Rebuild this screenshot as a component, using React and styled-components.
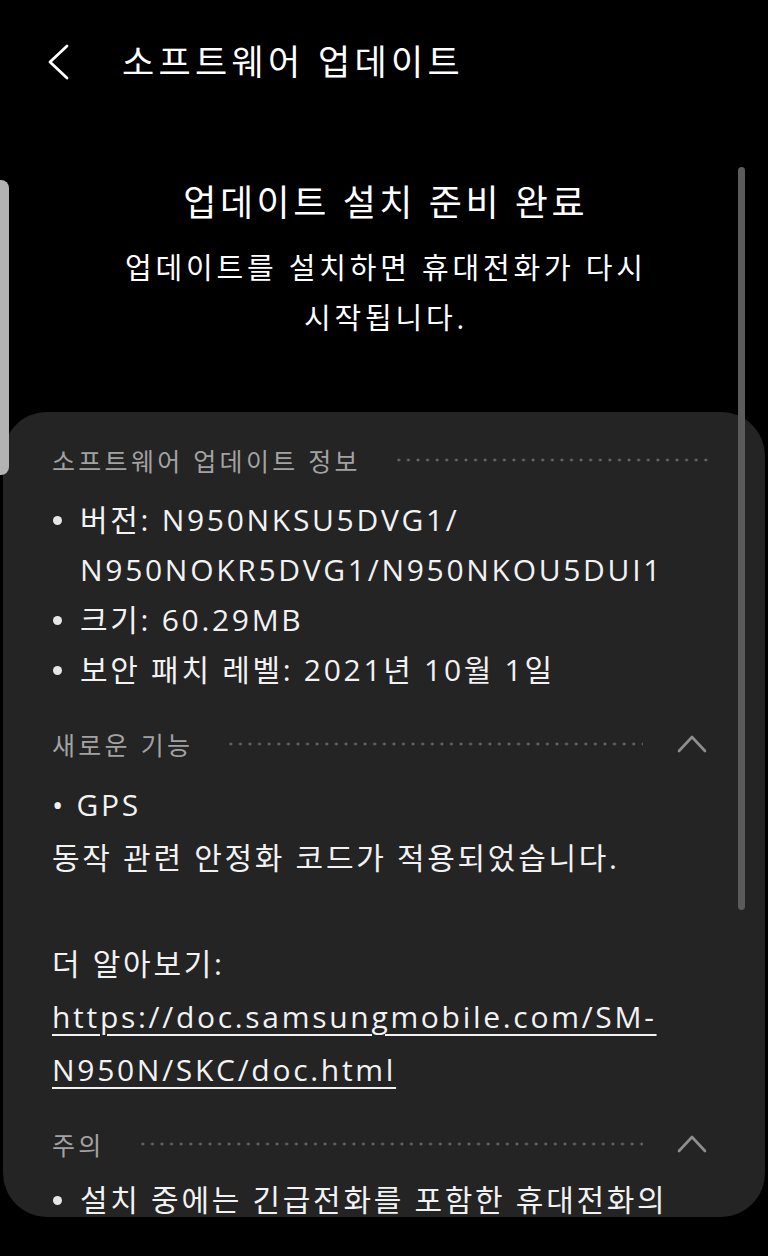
import React from "react";
import styled, { createGlobalStyle } from "styled-components";

const FONT = `"Open Sans", "Noto Sans CJK KR", sans-serif`;

const Global = createGlobalStyle`
  html, body { margin: 0; padding: 0; background: #000; }
  body { font-family: ${FONT}; -webkit-font-smoothing: antialiased; }
  * { box-sizing: border-box; }
`;

const Screen = styled.div`
  position: relative;
  width: 768px;
  height: 1256px;
  background: #000;
  overflow: hidden;
  color: #f2f2f2;
  font-family: ${FONT};
`;

const Header = styled.header`
  height: 124px;
  display: flex;
  align-items: center;
  padding-left: 46px;
`;

const BackButton = styled.button`
  width: 76px;
  height: 50px;
  padding: 0;
  border: 0;
  background: transparent;
  display: flex;
  align-items: center;
  cursor: pointer;
`;

const Title = styled.h1`
  margin: 0;
  font-size: 35px;
  font-weight: 400;
  letter-spacing: 4.3px;
  color: #fff;
  line-height: 50px;
`;

const Hero = styled.section`
  padding-top: 54px;
  text-align: center;
`;

const Heading = styled.h2`
  margin: 0;
  padding-left: 3.5px;
  font-size: 36px;
  font-weight: 400;
  letter-spacing: 3.5px;
  line-height: 50px;
  color: #fff;
`;

const SubText = styled.p`
  margin: 15px 0 0;
  padding-left: 3.8px;
  font-size: 29px;
  letter-spacing: 3.8px;
  line-height: 50px;
  color: #fff;
`;

const Card = styled.main`
  margin: 69px 3px 0;
  height: 805px;
  background: #242424;
  border-radius: 44px;
  padding: 28px 57px 0 49px;
  overflow: hidden;
`;

const Section = styled.section`
  margin-top: ${(p) => p.$top || 0}px;
`;

const SectionHeader = styled.div`
  height: 40px;
  display: flex;
  align-items: center;
  gap: 33px;
`;

const SectionTitle = styled.h3`
  margin: 0;
  font-size: 25px;
  font-weight: 400;
  letter-spacing: 3.3px;
  color: #a2a2a2;
  white-space: nowrap;
`;

const Dots = styled.div`
  flex: 1;
  height: 4px;
  background-image: radial-gradient(circle, #666 1.3px, transparent 1.7px);
  background-size: 9.6px 4px;
  background-repeat: repeat-x;
`;

const Toggle = styled.button`
  width: 32px;
  height: 24px;
  padding: 0;
  border: 0;
  background: transparent;
  display: flex;
  align-items: center;
  justify-content: center;
`;

const List = styled.ul`
  list-style: none;
  margin: ${(p) => p.$top}px 0 0;
  padding: 0;
`;

const Item = styled.li`
  display: flex;
  font-size: 30px;
  letter-spacing: 2.7px;
  line-height: 50px;
  color: #f2f2f2;
`;

const Bullet = styled.span`
  flex: 0 0 28px;
  height: 50px;
  display: flex;
  align-items: center;
  &::before {
    content: "";
    width: 9px;
    height: 9px;
    border-radius: 50%;
    background: #e6e6e6;
    margin-left: 1px;
  }
`;

const Para = styled.p`
  margin: ${(p) => p.$top}px 0 0;
  font-size: 30px;
  letter-spacing: 2.7px;
  line-height: 53px;
  color: #f2f2f2;
`;

const DocLink = styled.a`
  color: #f2f2f2;
  text-decoration: underline;
  text-decoration-thickness: 2px;
  text-underline-offset: 6px;
`;

const EdgeHandle = styled.div`
  position: absolute;
  left: 0;
  top: 180px;
  width: 9px;
  height: 295px;
  background: #b3b3b3;
  border-radius: 0 8px 8px 0;
`;

const ScrollThumb = styled.div`
  position: absolute;
  left: 738px;
  top: 167px;
  width: 7px;
  height: 743px;
  background: #5b5b5b;
  border-radius: 4px;
`;

const ChevronUp = () => (
  <svg width="32" height="20" viewBox="0 0 32 20">
    <polyline points="3,17 16,3 29,17" fill="none" stroke="#8e8e8e" strokeWidth="2.6" strokeLinecap="round" strokeLinejoin="round" />
  </svg>
);

const ChevronLeft = () => (
  <svg width="24" height="36" viewBox="0 0 24 36">
    <polyline points="21,2 4,18 21,34" fill="none" stroke="#fff" strokeWidth="2.8" strokeLinecap="round" strokeLinejoin="round" />
  </svg>
);

export default function App() {
  return (
    <>
      <Global />
      <Screen>
        <Header>
          <BackButton aria-label="뒤로">
            <ChevronLeft />
          </BackButton>
          <Title>소프트웨어 업데이트</Title>
        </Header>

        <Hero>
          <Heading>업데이트 설치 준비 완료</Heading>
          <SubText>
            업데이트를 설치하면 휴대전화가 다시
            <br />
            시작됩니다.
          </SubText>
        </Hero>

        <Card>
          <Section>
            <SectionHeader>
              <SectionTitle>소프트웨어 업데이트 정보</SectionTitle>
              <Dots />
            </SectionHeader>
            <List $top={15}>
              <Item>
                <Bullet />
                <span>
                  버전: N950NKSU5DVG1/
                  <br />
                  N950NOKR5DVG1/N950NKOU5DUI1
                </span>
              </Item>
              <Item>
                <Bullet />
                <span>크기: 60.29MB</span>
              </Item>
              <Item>
                <Bullet />
                <span>보안 패치 레벨: 2021년 10월 1일</span>
              </Item>
            </List>
          </Section>

          <Section $top={29}>
            <SectionHeader>
              <SectionTitle>새로운 기능</SectionTitle>
              <Dots />
              <Toggle aria-label="접기">
                <ChevronUp />
              </Toggle>
            </SectionHeader>
            <Para $top={14}>
              • GPS
              <br />
              동작 관련 안정화 코드가 적용되었습니다.
            </Para>
            <Para $top={53}>
              더 알아보기:
              <br />
              <DocLink href="#">
                https://doc.samsungmobile.com/SM-
                <br />
                N950N/SKC/doc.html
              </DocLink>
            </Para>
          </Section>

          <Section $top={28}>
            <SectionHeader>
              <SectionTitle>주의</SectionTitle>
              <Dots />
              <Toggle aria-label="접기">
                <ChevronUp />
              </Toggle>
            </SectionHeader>
            <List $top={11}>
              <Item>
                <Bullet />
                <span>설치 중에는 긴급전화를 포함한 휴대전화의</span>
              </Item>
            </List>
          </Section>
        </Card>

        <EdgeHandle />
        <ScrollThumb />
      </Screen>
    </>
  );
}
